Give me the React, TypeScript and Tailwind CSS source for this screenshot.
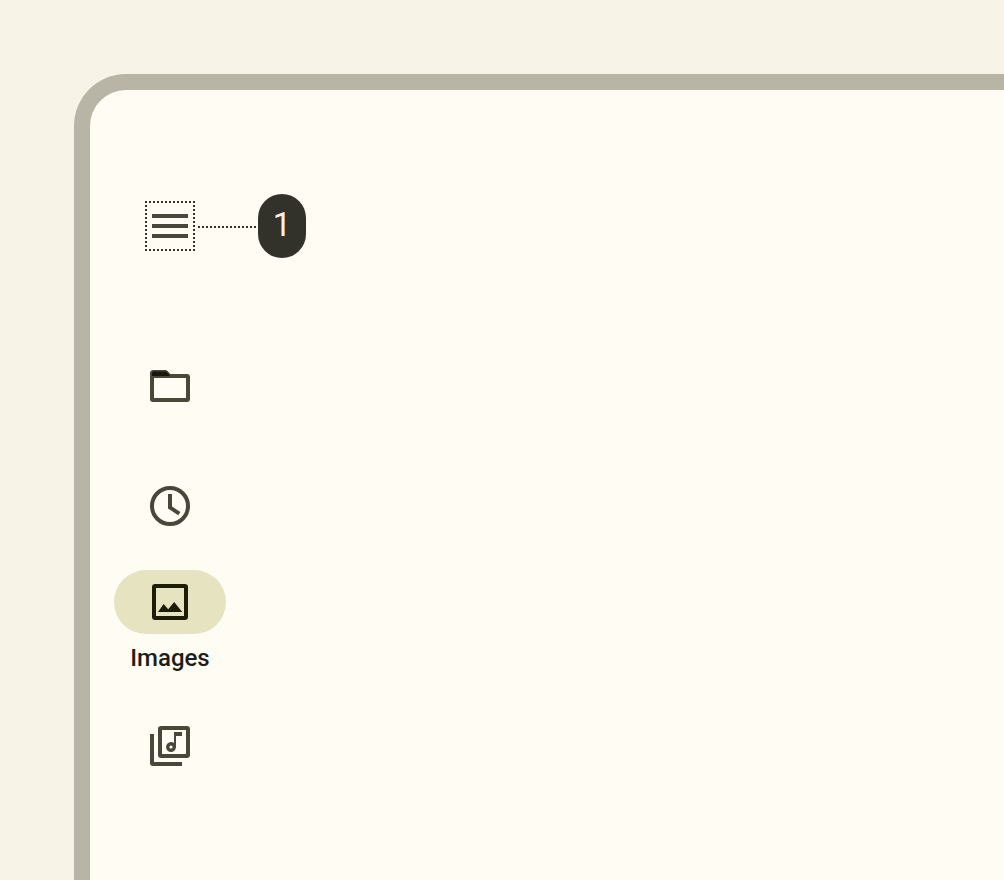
import type { ReactNode } from "react";

function Icon({ children }: { children: ReactNode }) {
  return (
    <svg viewBox="0 0 24 24" className="size-12 shrink-0" fill="currentColor" aria-hidden="true">
      {children}
    </svg>
  );
}

function MenuIcon() {
  return (
    <Icon>
      <path d="M3 18h18v-2H3v2zm0-5h18v-2H3v2zm0-7v2h18V6H3z" />
    </Icon>
  );
}

function FolderIcon() {
  return (
    <Icon>
      <path
        fillRule="evenodd"
        d="M3.5 4h6.2c.4 0 .8.2 1.1.5L12.2 6h8.4c.8 0 1.4.6 1.4 1.4v11.2c0 .8-.6 1.4-1.4 1.4H3.4c-.8 0-1.4-.6-1.4-1.4V5.5C2 4.7 2.7 4 3.5 4zM4 8v10h16V8H4z"
      />
      <path d="M3.4 4.8h6.3c.4 0 .7.2.9.4L12 7H3V5.2z" fill="#16160a" />
    </Icon>
  );
}

function ClockIcon() {
  return (
    <Icon>
      <circle cx="12" cy="12" r="9" fill="none" stroke="currentColor" strokeWidth="2" />
      <path d="M11 6h2v6.3l4.2 2.7-1.1 1.6L11 13.3z" />
    </Icon>
  );
}

function ImageIcon() {
  return (
    <Icon>
      <rect x="4" y="4" width="16" height="16" rx="0.6" fill="none" stroke="currentColor" strokeWidth="2" />
      <path d="M6 17l2.8-4 2.3 2.6 3-3.6 4 5z" />
    </Icon>
  );
}

function MusicLibraryIcon() {
  return (
    <Icon>
      <rect x="7" y="3" width="14" height="14" rx="0.6" fill="none" stroke="currentColor" strokeWidth="2" />
      <path d="M2 6h2v14h14v2H3.4C2.6 22 2 21.4 2 20.6z" />
      <path
        fillRule="evenodd"
        d="M14 5h4v2h-3v5.5A2.5 2.5 0 1 1 14 10.5zM12.5 11.7a.8.8 0 1 0 0 1.6.8.8 0 0 0 0-1.6z"
      />
    </Icon>
  );
}

interface DestinationProps {
  label: string;
  icon: ReactNode;
}

function Destination({ label, icon }: DestinationProps) {
  return (
    <a href="#" aria-label={label} className="flex h-28 items-center justify-center text-[#49473a]">
      {icon}
    </a>
  );
}

function ActiveDestination({ label, icon }: DestinationProps) {
  return (
    <a href="#" aria-current="page" className="flex h-28 flex-col gap-2 text-[#1d1c16]">
      <span className="flex h-16 items-center justify-center rounded-full bg-[#e6e3c1] text-[#1d1d06]">{icon}</span>
      <span className="text-center text-2xl font-medium">{label}</span>
    </a>
  );
}

export default function App() {
  return (
    <div className="flex min-h-screen bg-[#f7f3e6] pt-[74px] pl-[74px] font-['Roboto',sans-serif]">
      <main className="flex-1 rounded-tl-[52px] border-t-16 border-l-16 border-[#b8b5a7] bg-[#fffcf4] pt-[104px] pl-6">
        <div className="flex items-center">
          <div className="flex w-28 justify-center">
            <button
              type="button"
              aria-label="Menu"
              className="flex size-[50px] items-center justify-center border-2 border-dotted border-[#32312a] text-[#49473a]"
            >
              <MenuIcon />
            </button>
          </div>
          <div className="-ml-7 h-1 w-[58px] border-b-2 border-dotted border-[#32312a]" />
          <div className="ml-0.5 flex h-16 w-12 items-center justify-center rounded-full bg-[#32312a] pb-0.5 text-[33px] text-[#f5f0e7]">
            1
          </div>
        </div>
        <nav aria-label="Library" className="mt-[72px] flex w-28 flex-col gap-2">
          <Destination label="Folders" icon={<FolderIcon />} />
          <Destination label="Recent" icon={<ClockIcon />} />
          <ActiveDestination label="Images" icon={<ImageIcon />} />
          <Destination label="Music" icon={<MusicLibraryIcon />} />
        </nav>
      </main>
    </div>
  );
}
